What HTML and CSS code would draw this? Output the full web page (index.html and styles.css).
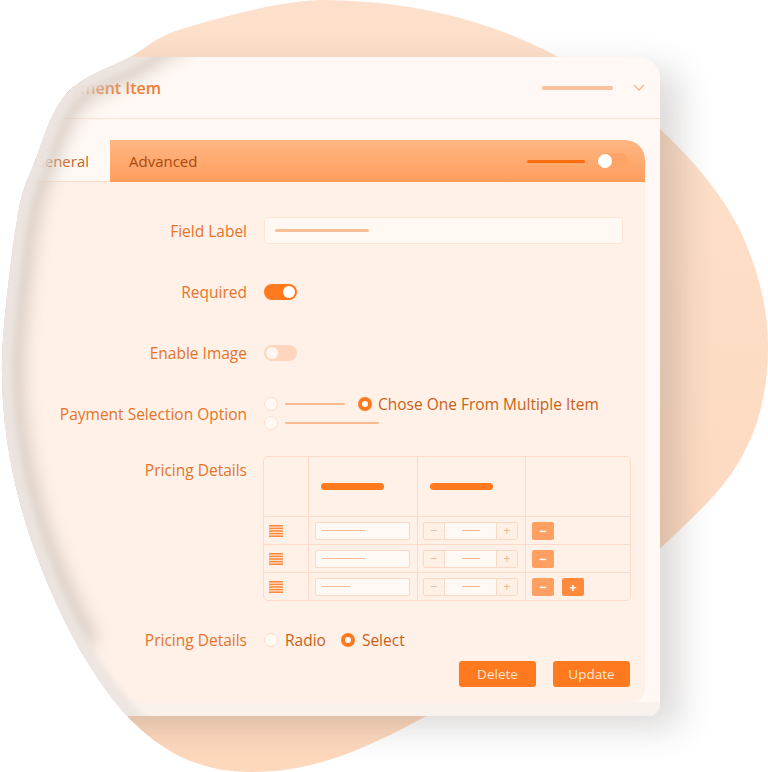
FILE: index.html
```html
<!DOCTYPE html>
<html>
<head>
<meta charset="utf-8">
<link rel="stylesheet" href="styles.css">
</head>
<body>
<div class="stage">
  <svg class="blob" viewBox="0 0 768 772" width="768" height="772">
    <defs>
      <linearGradient id="bg" x1="0" y1="0" x2="0" y2="1">
        <stop offset="0" stop-color="#fde0cb"/>
        <stop offset="1" stop-color="#fdd8bd"/>
      </linearGradient>
    </defs>
    <path fill="url(#bg)" d="M 320 0 C 420 0 500 25 560 58 C 640 100 710 170 740 230 C 765 285 772 330 766 380 C 760 430 740 470 705 505 C 680 530 660 550 640 565 C 560 630 480 690 400 730 C 340 760 300 772 250 772 C 170 772 120 720 80 650 C 30 560 0 460 2 360 C 3.2 321.7 11.5 253.2 17 220 C 22.5 186.8 26.7 182.2 35 161 C 43.3 139.8 51.2 110.3 67 93 C 82.8 75.7 110.3 67.8 130 57 C 149.7 46.2 153.3 37.5 185 28 C 216.7 18.5 277.2 1.3 320 0 Z"/>
  </svg>

  <div class="clip">
    <div class="card">
      <div class="head">
        <span class="title">Payment Item</span>
        <span class="spacer"></span>
        <span class="head-bar"></span>
        <svg class="chev" width="12" height="7" viewBox="0 0 12 7"><path d="M1 1 L6 6 L11 1" fill="none" stroke="#f6b48d" stroke-width="1.3"/></svg>
      </div>
      <div class="panel">
        <div class="tabs">
          <div class="tab tab-general">General</div>
          <div class="tab tab-adv">
            <span class="adv-label">Advanced</span>
            <span class="adv-line"></span>
            <span class="adv-toggle"><span class="adv-knob"></span></span>
          </div>
        </div>
        <div class="body">
          <div class="row">
            <div class="label">Field Label</div>
            <div class="ctrl"><div class="input"><span class="input-line"></span></div></div>
          </div>
          <div class="row">
            <div class="label">Required</div>
            <div class="ctrl"><span class="toggle on"><span class="knob"></span></span></div>
          </div>
          <div class="row">
            <div class="label">Enable Image</div>
            <div class="ctrl"><span class="toggle off"><span class="knob"></span></span></div>
          </div>
          <div class="row">
            <div class="label">Payment Selection Option</div>
            <div class="ctrl">
              <div class="radio-group">
                <div class="rg-line">
                  <span class="radio"></span><span class="opt-line w60"></span>
                  <span class="radio sel ml13"></span><span class="opt-text">Chose One From Multiple Item</span>
                </div>
                <div class="rg-line">
                  <span class="radio"></span><span class="opt-line w94"></span>
                </div>
              </div>
            </div>
          </div>
          <div class="row row-table">
            <div class="label label-top">Pricing Details</div>
            <div class="ctrl">
              <div class="ptable">
                <div class="cell"></div>
                <div class="cell"><span class="hbar"></span></div>
                <div class="cell"><span class="hbar"></span></div>
                <div class="cell last-col"></div>

                <div class="cell"><svg class="drag" width="14" height="12" viewBox="0 0 14 12"><rect y="0" width="14" height="1.6" fill="#ff8a3d"/><rect y="2.6" width="14" height="1.6" fill="#ff8a3d"/><rect y="5.2" width="14" height="1.6" fill="#ff8a3d"/><rect y="7.8" width="14" height="1.6" fill="#ff8a3d"/><rect y="10.4" width="14" height="1.6" fill="#ff8a3d"/></svg></div>
                <div class="cell"><div class="cinput"><span class="cline w43"></span></div></div>
                <div class="cell"><div class="stepper"><span class="st-btn">−</span><span class="st-mid"><span class="st-line"></span></span><span class="st-btn st-plus">+</span></div></div>
                <div class="cell last-col"><span class="act minus">−</span></div>

                <div class="cell"><svg class="drag" width="14" height="12" viewBox="0 0 14 12"><rect y="0" width="14" height="1.6" fill="#ff8a3d"/><rect y="2.6" width="14" height="1.6" fill="#ff8a3d"/><rect y="5.2" width="14" height="1.6" fill="#ff8a3d"/><rect y="7.8" width="14" height="1.6" fill="#ff8a3d"/><rect y="10.4" width="14" height="1.6" fill="#ff8a3d"/></svg></div>
                <div class="cell"><div class="cinput"><span class="cline w43"></span></div></div>
                <div class="cell"><div class="stepper"><span class="st-btn">−</span><span class="st-mid"><span class="st-line"></span></span><span class="st-btn st-plus">+</span></div></div>
                <div class="cell last-col"><span class="act minus">−</span></div>

                <div class="cell last-row"><svg class="drag" width="14" height="12" viewBox="0 0 14 12"><rect y="0" width="14" height="1.6" fill="#ff8a3d"/><rect y="2.6" width="14" height="1.6" fill="#ff8a3d"/><rect y="5.2" width="14" height="1.6" fill="#ff8a3d"/><rect y="7.8" width="14" height="1.6" fill="#ff8a3d"/><rect y="10.4" width="14" height="1.6" fill="#ff8a3d"/></svg></div>
                <div class="cell last-row"><div class="cinput"><span class="cline w28"></span></div></div>
                <div class="cell last-row"><div class="stepper"><span class="st-btn">−</span><span class="st-mid"><span class="st-line"></span></span><span class="st-btn st-plus">+</span></div></div>
                <div class="cell last-col last-row"><span class="act minus">−</span><span class="act plus">+</span></div>
              </div>
            </div>
          </div>
          <div class="row row-choice">
            <div class="label">Pricing Details</div>
            <div class="ctrl">
              <span class="radio"></span><span class="choice-text">Radio</span>
              <span class="radio sel ml15"></span><span class="choice-text">Select</span>
            </div>
          </div>
          <div class="actions">
            <span class="btn">Delete</span>
            <span class="btn">Update</span>
          </div>
        </div>
      </div>
    </div>
  </div>

  <svg class="edge" viewBox="0 0 768 772" width="768" height="772">
    <defs>
      <clipPath id="blobclip"><path d="M 320 0 C 420 0 500 25 560 58 C 640 100 710 170 740 230 C 765 285 772 330 766 380 C 760 430 740 470 705 505 C 680 530 660 550 640 565 C 560 630 480 690 400 730 C 340 760 300 772 250 772 C 170 772 120 720 80 650 C 30 560 0 460 2 360 C 3.2 321.7 11.5 253.2 17 220 C 22.5 186.8 26.7 182.2 35 161 C 43.3 139.8 51.2 110.3 67 93 C 82.8 75.7 110.3 67.8 130 57 C 149.7 46.2 153.3 37.5 185 28 C 216.7 18.5 277.2 1.3 320 0 Z"/></clipPath>
      <clipPath id="cardclip"><rect x="0" y="57" width="300" height="659"/></clipPath>
      <filter id="blur" x="-20%" y="-20%" width="140%" height="140%"><feGaussianBlur stdDeviation="9"/></filter>
      <filter id="blur2" x="-20%" y="-20%" width="140%" height="140%"><feGaussianBlur stdDeviation="3"/></filter>
    </defs>
    <g clip-path="url(#cardclip)">
      <g clip-path="url(#blobclip)">
        <path d="M 80 650 C 30 560 0 460 2 360 C 3.2 321.7 11.5 253.2 17 220 C 22.5 186.8 26.7 182.2 35 161 C 43.3 139.8 51.2 110.3 67 93 C 82.8 75.7 110.3 67.8 130 57 C 149.7 46.2 153.3 37.5 185 28" fill="none" stroke="#cbbdb3" stroke-opacity="0.7" stroke-width="44" filter="url(#blur)"/>
        <path d="M 250 772 C 170 772 120 720 80 650 C 30 560 0 460 2 360 C 3.2 321.7 11.5 253.2 17 220 C 22.5 186.8 26.7 182.2 35 161 C 43.3 139.8 51.2 110.3 67 93 C 82.8 75.7 110.3 67.8 130 57 C 149.7 46.2 153.3 37.5 185 28" fill="none" stroke="#ece5e0" stroke-opacity="0.95" stroke-width="24" filter="url(#blur2)"/>
      </g>
    </g>
  </svg>
</div>
</body>
</html>
```

FILE: styles.css
```css
* { box-sizing: border-box; }
html, body { margin: 0; padding: 0; background: #ffffff; }
body {
  width: 768px;
  height: 772px;
  overflow: hidden;
  font-family: "Open Sans", "DejaVu Sans", sans-serif;
}
.stage { position: relative; width: 768px; height: 772px; }
.blob { position: absolute; left: 0; top: 0; }
.edge { position: absolute; left: 0; top: 0; pointer-events: none; }
.clip {
  position: absolute;
  left: 0; top: 0; width: 768px; height: 772px;
  clip-path: path('M 320 0 L 768 0 L 768 772 L 250 772 C 170 772 120 720 80 650 C 30 560 0 460 2 360 C 3.2 321.7 11.5 253.2 17 220 C 22.5 186.8 26.7 182.2 35 161 C 43.3 139.8 51.2 110.3 67 93 C 82.8 75.7 110.3 67.8 130 57 C 149.7 46.2 153.3 37.5 185 28 C 216.7 18.5 277.2 1.3 320 0 Z');
}
.card {
  position: absolute;
  left: -20px; top: 57px;
  width: 680px; height: 659px;
  background: linear-gradient(#fff8f4 0, #fff8f4 calc(100% - 14px), #f8f1ec calc(100% - 14px));
  border-radius: 0 22px 12px 0;
  box-shadow: 20px 12px 34px 0 rgba(80, 70, 65, 0.2);
  display: flex;
  flex-direction: column;
}
.head {
  height: 62px;
  border-bottom: 1px solid #fde2d0;
  display: flex;
  align-items: center;
  padding-right: 15px;
}
.title {
  width: 181px;
  text-align: right;
  white-space: nowrap;
  font-size: 16px;
  font-weight: 600;
  color: #f27a26;
}
.spacer { flex: 1; }
.head-bar {
  width: 71px; height: 4px;
  border-radius: 2px;
  background: #fbc29e;
  margin-right: 20px;
}
.chev { display: block; }
.panel {
  flex: 1;
  margin: 21px 15px 13px 0;
  display: flex;
  flex-direction: column;
}
.tabs { display: flex; height: 42px; }
.tab {
  display: flex;
  align-items: center;
  font-size: 15px;
}
.tab-general {
  width: 130px;
  justify-content: flex-end;
  padding-right: 21px;
  color: #c8641f;
  background: #fff9f5;
  border-bottom: 1px solid #fcdcc8;
}
.tab-adv {
  flex: 1;
  padding-left: 19px;
  padding-right: 17px;
  background: linear-gradient(#ffb683, #ff9e5d);
  border-top-right-radius: 20px;
  color: #a9490d;
}
.adv-label { flex: 1; }
.adv-line {
  width: 58px; height: 3px;
  background: #ff6d0e;
  border-radius: 2px;
  margin-right: 12px;
}
.adv-toggle {
  width: 31px; height: 16px;
  border-radius: 8px;
  background: #ffa467;
  display: flex;
  align-items: center;
  padding-left: 1px;
}
.adv-knob {
  width: 14px; height: 14px;
  border-radius: 50%;
  background: #ffffff;
}
.body {
  flex: 1;
  background: #fff1e8;
  border-bottom-right-radius: 14px;
  padding-top: 18px;
  display: flex;
  flex-direction: column;
}
.row {
  display: grid;
  grid-template-columns: 267px 1fr;
  column-gap: 17px;
  height: 61px;
  align-items: center;
}
.label {
  text-align: right;
  font-size: 15.5px;
  color: #e5742a;
  line-height: 20px;
}
.label-top { align-self: start; padding-top: 4px; }
.ctrl { display: flex; align-items: center; }
.input {
  width: 359px; height: 27px;
  background: #fff8f3;
  border: 1px solid #fde4d4;
  border-radius: 4px;
  display: flex;
  align-items: center;
  padding-left: 10px;
}
.input-line {
  width: 94px; height: 3px;
  border-radius: 2px;
  background: #fbbd95;
}
.toggle {
  width: 33px; height: 16px;
  border-radius: 8px;
  display: flex;
  align-items: center;
  padding: 0 2px;
}
.toggle .knob {
  width: 12px; height: 12px;
  border-radius: 50%;
}
.toggle.on { background: #ff7a1f; justify-content: flex-end; }
.toggle.on .knob { background: #ffffff; }
.toggle.off { background: #fdd6bd; }
.toggle.off .knob { background: #fff6f0; }
.radio-group { display: flex; flex-direction: column; }
.rg-line { display: flex; align-items: center; height: 19px; }
.radio {
  width: 14px; height: 14px;
  border-radius: 50%;
  background: #fff8f3;
  border: 1px solid #fde0cd;
  flex: none;
}
.radio.sel {
  background: #ff7a1f;
  border: 4px solid #ff7a1f;
  position: relative;
}
.radio.sel::after {
  content: "";
  position: absolute;
  left: 0; top: 0;
  width: 6px; height: 6px;
  border-radius: 50%;
  background: #ffffff;
}
.ml13 { margin-left: 13px; }
.ml15 { margin-left: 15px; }
.opt-line {
  height: 2px;
  background: #fbb98f;
  margin-left: 7px;
  border-radius: 1px;
}
.w60 { width: 60px; }
.w94 { width: 94px; }
.opt-text {
  margin-left: 6px;
  font-size: 15.5px;
  color: #c95f17;
  line-height: 19px;
}
.row-table {
  height: auto;
  margin-top: 12px;
  align-items: start;
}
.row-table .ctrl { margin-left: -1px; }
.ptable {
  width: 368px;
  display: grid;
  grid-template-columns: 45px 109px 108px 1fr;
  grid-template-rows: 60px 28px 28px 27px;
  border: 1px solid #fcdcc8;
  border-radius: 5px;
}
.cell {
  border-right: 1px solid #fcdcc8;
  border-bottom: 1px solid #fcdcc8;
  display: flex;
  align-items: center;
}
.last-col { border-right: none; }
.last-row { border-bottom: none; }
.hbar {
  width: 63px; height: 7px;
  border-radius: 4px;
  background: #ff7a1f;
  margin-left: 12px;
}
.drag { display: block; margin-left: 5px; }
.cinput {
  width: 95px; height: 18px;
  margin-left: 6px;
  background: #fff9f5;
  border: 1px solid #fcd9c4;
  border-radius: 2px;
  display: flex;
  align-items: center;
  padding-left: 6px;
}
.cline { height: 1.5px; background: #fbbd99; }
.w43 { width: 43px; }
.w28 { width: 28px; }
.stepper {
  width: 95px; height: 18px;
  margin-left: 5px;
  display: flex;
  border: 1px solid #fcd9c4;
  border-radius: 2px;
}
.st-btn {
  width: 21px;
  display: flex;
  align-items: center;
  justify-content: center;
  font-size: 12px;
  color: #f8b38e;
  background: #fff0e6;
  border-right: 1px solid #fcd9c4;
}
.st-plus { border-right: none; border-left: 1px solid #fcd9c4; }
.st-mid {
  flex: 1;
  background: #fff9f5;
  display: flex;
  align-items: center;
  justify-content: center;
}
.st-line { width: 18px; height: 1.5px; background: #fbb48e; }
.act {
  width: 22px; height: 18px;
  margin-left: 6px;
  border-radius: 2px;
  display: flex;
  align-items: center;
  justify-content: center;
  color: #ffffff;
  font-size: 13px;
  font-weight: 700;
}
.act.minus { background: #ff9f62; }
.act.plus { background: #ff8a3c; margin-left: 8px; }
.row-choice {
  height: 20px;
  margin-top: 29px;
}
.choice-text {
  margin-left: 7px;
  font-size: 15.5px;
  color: #c95f17;
  line-height: 20px;
}
.actions {
  margin-top: 11px;
  display: flex;
  justify-content: flex-end;
  gap: 17px;
  padding-right: 15px;
}
.btn {
  width: 77px; height: 26px;
  border-radius: 3px;
  background: #ff7a1f;
  color: #ffe3cf;
  font-size: 13.5px;
  display: flex;
  align-items: center;
  justify-content: center;
}
```
